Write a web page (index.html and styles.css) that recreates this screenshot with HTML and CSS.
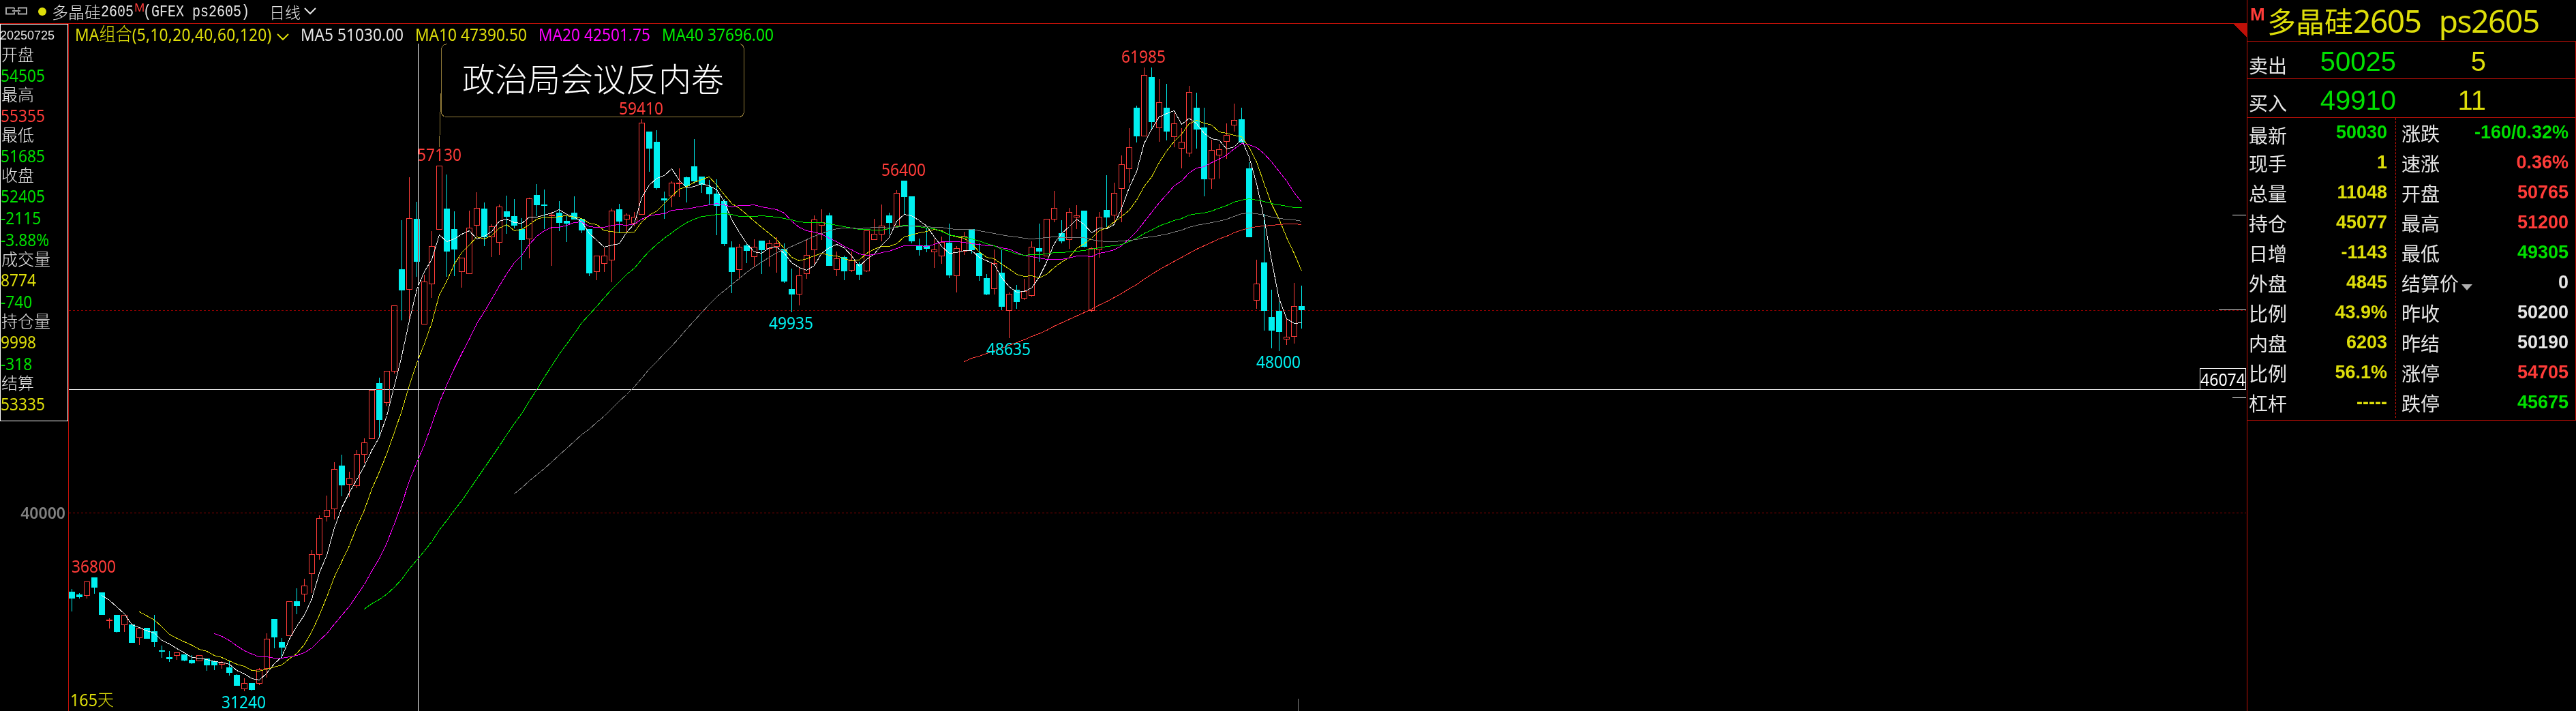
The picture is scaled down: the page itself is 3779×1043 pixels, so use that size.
FILE: index.html
```
<!DOCTYPE html>
<html lang="zh-CN">
<head>
    <meta charset="utf-8">
    <title>多晶硅2605 日线</title>
    <link rel="stylesheet" href="styles.css">
</head>
<body>
<div class="main">
    <div class="titlebar">
        <svg class="link-icon" width="34" height="12" viewBox="0 0 34 12">
            <path d="M14 1.5H2V10.5H14V8M14 4V1.5M20 4V1.5H32V10.5H20V8" />
            <path d="M11 6H23" />
        </svg>
        <span class="dot"></span>
        <span class="name">多晶硅</span>
        <span class="mono num">2605</span>
        <sup class="main-mark">M</sup>
        <span class="mono code">(GFEX ps2605)</span>
        <span class="period">日线</span>
        <svg class="chevron" width="18" height="12" viewBox="0 0 18 12"><path d="M1 1L9 9L17 1" /></svg>
    </div>
    <div class="content">
        <div class="left">
            <div class="databox">
                <div class="date">20250725</div>
                <div class="label">开盘</div>
                <div class="value green">54505</div>
                <div class="label">最高</div>
                <div class="value red">55355</div>
                <div class="label">最低</div>
                <div class="value green">51685</div>
                <div class="label">收盘</div>
                <div class="value green">52405</div>
                <div class="value green">-2115</div>
                <div class="value green">-3.88%</div>
                <div class="label">成交量</div>
                <div class="value yellow">8774</div>
                <div class="value green">-740</div>
                <div class="label">持仓量</div>
                <div class="value yellow">9998</div>
                <div class="value green">-318</div>
                <div class="label">结算</div>
                <div class="value yellow">53335</div>
            </div>
            <div class="axis">40000</div>
        </div>
        <div class="chart">
            <svg id="kline" width="3195" height="1008" viewBox="101 35 3195 1008"></svg>
            <div class="legend">
                <span class="yellow combo">MA<span class="cjk">组合</span>(5,10,20,40,60,120)</span>
                <svg class="chevron yellow" width="18" height="12" viewBox="0 0 18 12"><path d="M1 1L9 9L17 1" /></svg>
                <span class="ma5">MA5 51030.00</span>
                <span class="ma10 yellow">MA10 47390.50</span>
                <span class="ma20">MA20 42501.75</span>
                <span class="ma40">MA40 37696.00</span>
            </div>
        </div>
    </div>
</div>

<div class="panel">
    <div class="panel-title">
        <span class="mark">M</span>
        <span class="big-cjk">多晶硅</span><span class="big">2605</span><span class="big big-code">ps2605</span>
    </div>
    <div class="order sell"><span class="olabel">卖出</span><span class="price">50025</span><span class="vol">5</span></div>
    <div class="order buy"><span class="olabel">买入</span><span class="price">49910</span><span class="vol">11</span></div>
    <div class="quotes">
        <div class="col">
            <div class="row"><span class="first">最新</span><b class="green">50030</b></div>
            <div class="row"><span>现手</span><b class="yellow">1</b></div>
            <div class="row"><span>总量</span><b class="yellow">11048</b></div>
            <div class="row"><span>持仓</span><b class="yellow">45077</b></div>
            <div class="row"><span>日增</span><b class="yellow">-1143</b></div>
            <div class="row"><span>外盘</span><b class="yellow">4845</b></div>
            <div class="row"><span>比例</span><b class="yellow">43.9%</b></div>
            <div class="row"><span>内盘</span><b class="yellow">6203</b></div>
            <div class="row"><span>比例</span><b class="yellow">56.1%</b></div>
            <div class="row"><span>杠杆</span><b class="yellow">-----</b></div>
        </div>
        <div class="col col-right">
            <div class="row"><span>涨跌</span><b class="green">-160/0.32%</b></div>
            <div class="row"><span>速涨</span><b class="red">0.36%</b></div>
            <div class="row"><span>开盘</span><b class="red">50765</b></div>
            <div class="row"><span>最高</span><b class="red">51200</b></div>
            <div class="row"><span>最低</span><b class="green">49305</b></div>
            <div class="row"><span>结算价<i class="drop"></i></span><b>0</b></div>
            <div class="row"><span>昨收</span><b>50200</b></div>
            <div class="row"><span>昨结</span><b>50190</b></div>
            <div class="row"><span>涨停</span><b class="red">54705</b></div>
            <div class="row"><span>跌停</span><b class="green">45675</b></div>
        </div>
    </div>
</div>
<script src="chart.js"></script>
</body>
</html>
```
FILE: styles.css
```
body {
    margin: 0;
    width: 3779px;
    height: 1043px;
    overflow: hidden;
    display: flex;
    background: #000;
    color: #e6e6e6;
    font-family: "Noto Sans", "Noto Sans CJK SC", sans-serif;
    white-space: nowrap;
}
.green { color: #00e000; }
.red { color: #ff3c39; }
.yellow { color: #dede0a; }

.main {
    width: 3296px;
}

/* title bar */
.titlebar {
    box-sizing: border-box;
    height: 35px;
    border-bottom: 1px solid #c01008;
    padding-left: 7px;
    display: flex;
    align-items: center;
    font: 300 24px/34px "Noto Sans CJK SC", sans-serif;
    color: #e6e6e6;
}
.link-icon {
    margin-bottom: 3px;
    fill: none;
    stroke: #a8a8a8;
    stroke-width: 2;
}
.dot {
    width: 12px;
    height: 12px;
    margin: 0 8px 0 15px;
    border-radius: 50%;
    background: #dede0a;
}
.mono {
    font: 24px/37px "Liberation Mono", monospace;
    transform: scaleX(0.8333);
    transform-origin: left;
}
.num { width: 49px; }
.code { width: 156px; }
.main-mark {
    width: 13px;
    margin-bottom: 12px;
    font: 17px/18px "Noto Sans", sans-serif;
    color: #ff3c39;
}
.period {
    margin: 0 5px 0 29px;
    font-size: 23px;
}
.chevron {
    fill: none;
    stroke: currentColor;
    stroke-width: 2;
}

/* left column */
.content {
    display: flex;
    height: 1008px;
}
.left {
    width: 100px;
}
.databox {
    box-sizing: border-box;
    width: 100px;
    height: 583px;
    border: 1px solid #fff;
}
.date {
    height: 31px;
    margin-left: -1px;
    font: 18px/33px "Liberation Sans", sans-serif;
}
.label {
    height: 27px;
    padding-left: 1px;
    font: 300 24px/24px "Noto Sans CJK SC", sans-serif;
}
/* squeezed digits */
.value {
    height: 32px;
    font-size: 25.5px;
    line-height: 32px;
    transform: scaleX(0.89);
    transform-origin: left;
}
.axis {
    margin-top: 117px;
    padding-right: 4px;
    font-size: 23px;
    font-weight: 600;
    line-height: 34px;
    text-align: right;
    color: #808080;
}

/* chart */
.chart {
    position: relative;
    width: 3195px;
    border-left: 1px solid #c01008;
}
#kline {
    display: block;
}
#kline text {
    font-size: 25.5px;
}
#kline .days {
    font: 300 24px "Noto Sans CJK SC", sans-serif;
}
#kline .note {
    font: 300 48px "Noto Sans CJK SC", sans-serif;
}
.legend {
    position: absolute;
    left: 9px;
    top: 0;
    display: flex;
    align-items: center;
    height: 29px;
    background: #000;
    font-size: 25.5px;
}
.legend span {
    transform: scaleX(0.89);
    transform-origin: left;
}
.legend .cjk {
    font: 300 27px/28px "Noto Sans CJK SC", sans-serif;
    letter-spacing: 0;
}
.legend .combo {
    width: 290px;
    letter-spacing: 0.3px;
}
.legend .chevron { margin: 10px 17px 0 6px; }
.legend .ma5 { width: 168px; }
.legend .ma10 { width: 181px; }
.legend .ma20 { width: 181px; color: #f0f; }
.legend .ma40 { width: 170px; color: #00f000; }

/* quote panel */
.panel {
    box-sizing: border-box;
    width: 483px;
    border-left: 1px solid #c01008;
}
.panel-title {
    box-sizing: border-box;
    height: 60px;
    padding-left: 4px;
    display: flex;
    align-items: center;
    color: #dede0a;
}
.mark {
    width: 25px;
    margin-bottom: 18px;
    font: bold 26px/28px "Liberation Sans", sans-serif;
    color: #ff3c39;
}
.big-cjk {
    font: 42px/60px "Noto Sans CJK SC", sans-serif;
}
.big {
    font-size: 46px;
    line-height: 60px;
    letter-spacing: -1.4px;
}
.big-code { margin-left: 26px; }
.order {
    box-sizing: border-box;
    height: 55px;
    border-top: 1px solid #c01008;
    border-right: 1px solid #c01008;
    padding-left: 2px;
    display: flex;
    font: 40px/58px "Liberation Sans", sans-serif;
}
.buy {
    height: 57px;
    line-height: 62px;
}
.olabel {
    width: 80px;
    padding-top: 5px;
    font: 28px/58px "Noto Sans CJK SC", sans-serif;
}
.price {
    width: 136px;
    text-align: right;
    color: #00e000;
}
.vol {
    width: 132px;
    text-align: right;
    color: #dede0a;
}
.quotes {
    box-sizing: border-box;
    height: 445px;
    border: 1px solid #c01008;
    border-left: none;
    display: flex;
}
.col {
    width: 203px;
    height: 440px;
    padding: 0 12px 0 2px;
    border-right: 1px dashed #c01008;
}
.col-right {
    width: 245px;
    padding: 0 10px 0 8px;
    border: none;
}
.row {
    display: flex;
    justify-content: space-between;
    height: 44px;
    font: 28px/44px "Noto Sans CJK SC", sans-serif;
}
.row .first {
    padding-top: 3px;
}
.row b {
    font: bold 27px/43px "Liberation Sans", sans-serif;
}
.drop {
    display: inline-block;
    margin-left: 4px;
    vertical-align: 1px;
    border: 8.5px solid transparent;
    border-top: 9px solid #b0b0b0;
    border-bottom: none;
}
```
FILE: chart.js
```
// candles: [up, high, body top, body bottom, low], all in chart pixels
const candles = [
    [0,864,868,878,897],[0,870,872,876,878],[1,853,853,874,878],[0,847,847,862,871],[0,869,869,902,902],
    [1,907,909,911,922],[0,902,902,927,928],[1,902,902,917,927],[0,916,916,943,943],[1,921,921,936,946],
    [0,921,921,937,937],[0,902,926,942,949],[0,947,954,956,965],[0,955,964,967,971],[1,957,957,962,968],
    [0,960,960,969,970],[0,961,968,973,974],[1,961,961,970,970],[0,966,966,976,984],[0,969,970,976,983],
    [1,970,972,975,981],[0,970,979,987,991],[0,989,990,1006,1006],[1,995,1002,1011,1014],[0,1002,1002,1012,1013],
    [1,980,982,1003,1005],[1,929,937,981,994],[0,908,908,935,951],[0,936,942,950,965],[1,882,882,933,933],
    [0,863,882,889,901],[1,849,859,872,883],[1,807,813,842,870],[1,756,760,814,821],[1,727,748,758,765],
    [1,678,688,747,762],[0,667,683,712,728],[1,692,701,711,729],[1,660,666,713,716],[1,643,649,667,679],
    [1,572,572,644,644],[0,554,562,616,640],[1,544,544,591,596],[1,448,448,545,548],[0,323,395,426,470],
    [1,260,320,425,469],[0,296,321,384,406],[1,403,413,476,476],[1,339,361,417,437],[1,243,243,337,337],
    [0,256,306,369,406],[0,310,336,366,405],[1,378,378,399,422],[1,309,334,402,402],[1,282,305,331,346],
    [0,297,306,348,361],[1,329,332,348,377],[1,300,303,356,374],[0,287,310,318,343],[0,292,317,331,335],
    [0,320,336,352,396],[1,290,291,351,379],[0,270,286,301,317],[0,278,300,302,336],[1,311,315,317,390],
    [0,295,312,327,339],[0,317,324,328,355],[0,288,312,322,322],[0,320,321,338,342],[0,336,336,401,405],
    [1,375,375,399,411],[1,364,375,387,399],[1,306,309,382,414],[0,299,307,325,341],[1,313,315,322,340],
    [1,311,318,328,332],[1,175,180,315,315],[0,193,193,218,252],[0,191,208,276,278],[0,281,291,294,321],
    [1,266,268,288,304],[1,247,268,270,289],[0,259,260,273,297],[0,204,244,266,269],[0,259,259,271,283],
    [0,264,274,285,301],[0,263,284,302,345],[0,292,295,358,361],[0,354,363,399,430],[1,358,362,396,410],
    [0,357,360,368,386],[1,351,362,377,392],[0,353,353,367,402],[1,352,357,365,391],[1,348,357,362,400],
    [0,357,365,413,415],[0,394,424,432,458],[1,393,404,432,448],[1,351,374,402,409],[1,316,322,367,387],
    [1,307,326,331,352],[0,312,316,390,390],[1,369,379,396,405],[0,375,377,398,411],[1,369,382,397,399],
    [0,384,387,403,411],[1,338,338,398,399],[1,321,343,352,352],[1,300,331,344,354],[0,312,316,327,344],
    [1,279,283,332,332],[0,265,265,289,315],[0,288,288,354,357],[0,350,361,367,375],[0,335,360,365,370],
    [1,351,366,370,393],[1,347,355,376,387],[0,328,356,404,408],[1,361,364,405,429],[1,340,346,369,374],
    [0,336,336,367,372],[0,357,371,405,412],[0,402,408,432,433],[1,366,386,424,432],[0,367,400,450,455],
    [1,429,431,456,496],[0,418,425,443,453],[1,409,427,438,440],[1,354,362,434,435],[0,328,364,369,384],
    [1,321,321,376,376],[1,280,305,322,326],[0,323,342,354,357],[1,305,311,352,365],[1,301,316,319,336],
    [0,309,309,362,363],[1,363,364,456,458],[1,311,318,367,378],[0,257,308,319,333],[1,268,283,316,327],
    [1,228,241,277,326],[1,188,216,248,268],[0,155,158,200,209],[1,99,110,200,200],[0,99,113,179,189],
    [1,116,150,188,208],[0,123,158,193,206],[1,166,181,201,216],[1,188,208,218,247],[1,126,135,225,230],
    [0,136,158,190,218],[0,158,187,263,288],[1,205,220,263,277],[1,211,219,228,262],[1,181,198,208,233],
    [1,152,176,184,193],[0,158,175,209,209],[0,238,247,348,348],[1,381,416,441,453],[0,314,385,456,485],
    [0,425,465,485,511],[0,443,456,487,515],[1,467,494,498,506],[1,415,449,494,504],[0,419,449,455,482]
];

// [text, x, baseline, color]
const labels = [
    ['36800', 105, 840, '#ff3c39'],
    ['31240', 325, 1039, '#00f0f0'],
    ['57130', 612, 236, '#ff3c39'],
    ['59410', 908, 168, '#ff3c39'],
    ['49935', 1128, 483, '#00f0f0'],
    ['56400', 1293, 258, '#ff3c39'],
    ['48635', 1447, 521, '#00f0f0'],
    ['61985', 1645, 92, '#ff3c39'],
    ['48000', 1843, 540, '#00f0f0']
];

const first = 105.5;
const step = 11;

function line(x1, y1, x2, y2, color, extra) {
    return `<path d="M${x1} ${y1}L${x2} ${y2}" stroke="${color}" fill="none" ${extra || ''}/>`;
}

function text(str, x, y, color, width) {
    return `<text x="${x}" y="${y}" fill="${color}" textLength="${width}" lengthAdjust="spacingAndGlyphs">${str}</text>`;
}

function drawCandle(c, i) {
    const [up, high, top, bottom, low] = c;
    const x = first + i * step;
    const color = up ? '#ff3c39' : '#00f0f0';
    let s = '';
    if (high < top) s += line(x, high, x, top, color);
    if (low > bottom) s += line(x, bottom, x, low, color);
    if (up && bottom - top > 2) {
        s += `<rect x="${x - 4}" y="${top + 0.5}" width="8" height="${bottom - top - 1}" fill="none" stroke="${color}"/>`;
    } else {
        s += `<rect x="${x - 4.5}" y="${top}" width="9" height="${bottom - top}" fill="${color}"/>`;
    }
    return s;
}

function drawAverage(n, color) {
    const points = [];
    for (let i = n - 1; i < candles.length; i++) {
        let sum = 0;
        for (let k = i - n + 1; k <= i; k++) {
            sum += candles[k][0] ? candles[k][2] : candles[k][3] - 1;
        }
        points.push((first + i * step) + ',' + (Math.round(sum / n) + 0.5));
    }
    return `<polyline points="${points.join(' ')}" fill="none" stroke="${color}"/>`;
}

let out = '<g shape-rendering="crispEdges">';

// grid
out += line(101, 455.5, 3295, 455.5, '#8c0000', 'stroke-dasharray="3 3"');
out += line(101, 752.5, 3295, 752.5, '#8c0000', 'stroke-dasharray="3 3"');
out += '<path d="M3276 35H3296V54Z" fill="#c01008"/>';

candles.forEach((c, i) => out += drawCandle(c, i));

out += drawAverage(5, '#f0f0f0');
out += drawAverage(10, '#dede0a');
out += drawAverage(20, '#ff00ff');
out += drawAverage(40, '#00f000');
out += drawAverage(60, '#808080');
out += drawAverage(120, '#ff3c39');

// note bubble
out += '<path d="M656 64.5Q647.5 65 647.5 74V163Q647.5 171.5 656 171.5H1083Q1091.5 171.5 1091.5 163V74Q1091.5 66 1086 64.5" fill="none" stroke="#947d39"/>';
out += line(646.8, 137, 644.5, 216, '#947d39');

// marks at the right edge
out += line(3275, 315.5, 3295, 315.5, '#e6e6e6');
out += line(3255, 454.5, 3295, 454.5, '#e6e6e6');
out += line(3275, 583.5, 3295, 583.5, '#e6e6e6');
out += line(1904.5, 1025, 1904.5, 1043, '#808080');
out += '</g>';

for (const [str, x, y, color] of labels) {
    out += text(str, x, y, color, 65);
}
out += text('165', 103, 1036, '#dede0a', 40);
out += '<text class="days" x="143" y="1035" fill="#dede0a">天</text>';
out += '<text class="note" x="678" y="134" fill="#fff">政治局会议反内卷</text>';

// crosshair
out += '<g shape-rendering="crispEdges" style="mix-blend-mode: difference">';
out += line(613.5, 64, 613.5, 1043, '#fff') + line(101, 571.5, 3227, 571.5, '#fff') + '</g>';
out += '<rect x="3227.5" y="540.5" width="67" height="31" fill="#000" stroke="#fff"/>';
out += text('46074', 3228, 566, '#fff', 66);

document.getElementById('kline').innerHTML = out;
```
